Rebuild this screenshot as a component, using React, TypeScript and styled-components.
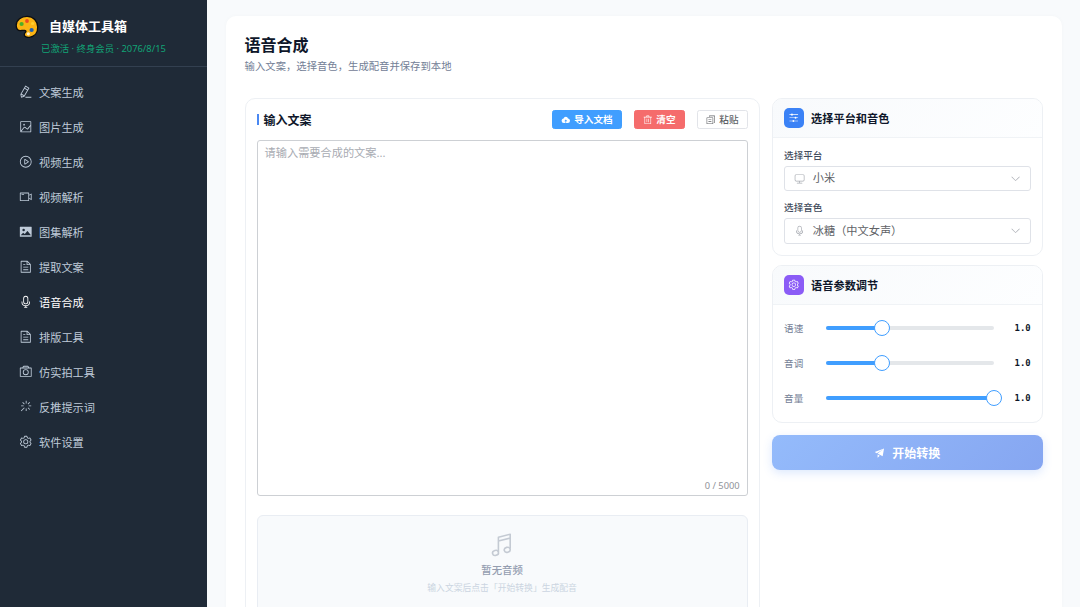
import React from 'react';
import styled, { createGlobalStyle } from 'styled-components';

const GlobalStyle = createGlobalStyle`
  *, *::before, *::after { box-sizing: border-box; }
  html, body, #root { height: 100%; }
  body {
    margin: 0;
    overflow: hidden;
    background: #f8fafc;
    font-family: "Noto Sans", "Noto Sans CJK SC", sans-serif;
    font-size: 11.2px;
    color: #0f172a;
  }
  button { font-family: inherit; margin: 0; }
  h1, h2, p { margin: 0; }
`;

const paths: Record<string, string> = {
  editPen:
    'm199.04 672.64 193.984 112 224-387.968-193.92-112-224 388.032zm-23.872 60.16 32.896 148.288 144.896-45.696zM455.04 229.248l193.92 112 56.704-98.112-193.984-112-56.64 98.112zM104.32 708.8l384-665.024 304.768 175.936L409.152 884.8h.064l-248.448 78.336zm384 254.272v-64h448v64h-448z',
  picture:
    'M160 160v704h704V160zm-32-64h768a32 32 0 0 1 32 32v768a32 32 0 0 1-32 32H128a32 32 0 0 1-32-32V128a32 32 0 0 1 32-32M384 288q64 0 64 64t-64 64-64-64 64-64M185.408 876.992l-50.816-38.912L350.72 556.032a96 96 0 0 1 134.592-17.856l1.856 1.472 122.88 99.136a32 32 0 0 0 44.992-4.864l216-269.888 49.92 39.936-215.808 269.824-.256.32a96 96 0 0 1-135.04 14.464l-122.88-99.072-.64-.512a32 32 0 0 0-44.8 5.952z',
  videoPlay:
    'M512 64a448 448 0 1 1 0 896 448 448 0 0 1 0-896m0 832a384 384 0 0 0 0-768 384 384 0 0 0 0 768m-48-247.616L668.608 512 464 375.616zm10.624-342.656 249.472 166.336a48 48 0 0 1 0 79.872L474.624 718.272A48 48 0 0 1 400 678.336V345.6a48 48 0 0 1 74.624-39.936z',
  videoCamera:
    'M704 768V256H128v512zm64-416 192-96v512l-192-96v128a32 32 0 0 1-32 32H96a32 32 0 0 1-32-32V224a32 32 0 0 1 32-32h640a32 32 0 0 1 32 32zm0 71.552v176.896l128 64V359.552zM192 320h192v64H192z',
  pictureFilled:
    'M96 896a32 32 0 0 1-32-32V160a32 32 0 0 1 32-32h832a32 32 0 0 1 32 32v704a32 32 0 0 1-32 32zm315.52-228.48-68.928-68.928a32 32 0 0 0-45.248 0L128 768.064h778.688l-242.112-290.56a32 32 0 0 0-49.216 0L458.752 665.408a32 32 0 0 1-47.232 2.112M256 384a96 96 0 1 0 192.064-.064A96 96 0 0 0 256 384',
  document:
    'M832 384H576V128H192v768h640zm-26.496-64L640 154.496V320zM160 64h480l256 256v608a32 32 0 0 1-32 32H160a32 32 0 0 1-32-32V96a32 32 0 0 1 32-32m160 448h384v64H320zm0-192h160v64H320zm0 384h384v64H320z',
  microphone:
    'M512 128a128 128 0 0 0-128 128v256a128 128 0 1 0 256 0V256a128 128 0 0 0-128-128m0-64a192 192 0 0 1 192 192v256a192 192 0 1 1-384 0V256A192 192 0 0 1 512 64m-32 832v-64a288 288 0 0 1-288-288v-32a32 32 0 0 1 64 0v32a224 224 0 0 0 224 224h64a224 224 0 0 0 224-224v-32a32 32 0 1 1 64 0v32a288 288 0 0 1-288 288v64h64a32 32 0 1 1 0 64H416a32 32 0 1 1 0-64z',
  camera:
    'M896 256H128v576h768zm-199.424-64-32.064-64h-304.96l-32 64zM96 192h160l46.336-92.608A64 64 0 0 1 359.552 64h304.96a64 64 0 0 1 57.216 35.328L768.192 192H928a32 32 0 0 1 32 32v640a32 32 0 0 1-32 32H96a32 32 0 0 1-32-32V224a32 32 0 0 1 32-32m416 512a160 160 0 1 0 0-320 160 160 0 0 0 0 320m0 64a224 224 0 1 1 0-448 224 224 0 0 1 0 448',
  magicStick:
    'M512 64h64v192h-64zm0 576h64v192h-64zM160 480v-64h192v64zm576 0v-64h192v64zM249.856 199.04l45.248-45.184L430.848 289.6 385.6 334.848 249.856 199.104zM657.152 606.4l45.248-45.248 135.744 135.744-45.248 45.248zM184.8 852.5 139.5 807.2 385.6 561.152l45.248 45.248zM702.4 334.848 657.152 289.6l135.744-135.744 45.248 45.248z',
  setting:
    'M600.704 64a32 32 0 0 1 30.464 22.208l35.2 109.376c14.784 7.232 28.928 15.36 42.432 24.512l112.384-24.192a32 32 0 0 1 34.432 15.36L944.32 364.8a32 32 0 0 1-4.032 37.504l-77.12 85.12a357.12 357.12 0 0 1 0 49.024l77.12 85.248a32 32 0 0 1 4.032 37.504l-88.704 153.6a32 32 0 0 1-34.432 15.296L708.8 803.904c-13.44 9.088-27.648 17.28-42.368 24.512l-35.264 109.376A32 32 0 0 1 600.704 960H423.296a32 32 0 0 1-30.464-22.208L357.696 828.48a351.616 351.616 0 0 1-42.56-24.64l-112.32 24.256a32 32 0 0 1-34.432-15.36L79.68 659.2a32 32 0 0 1 4.032-37.504l77.12-85.248a357.12 357.12 0 0 1 0-48.896l-77.12-85.248A32 32 0 0 1 79.68 364.8l88.704-153.6a32 32 0 0 1 34.432-15.296l112.32 24.256c13.568-9.152 27.776-17.408 42.56-24.64l35.2-109.312A32 32 0 0 1 423.232 64H600.64zm-23.424 64H446.72l-36.352 113.088-24.512 11.968a294.113 294.113 0 0 0-34.816 20.096l-22.656 15.36-116.224-25.088-65.28 113.152 79.68 88.192-1.92 27.136a293.12 293.12 0 0 0 0 40.192l1.92 27.136-79.808 88.192 65.344 113.152 116.224-25.024 22.656 15.296a294.113 294.113 0 0 0 34.816 20.096l24.512 11.968L446.72 896h130.688l36.48-113.152 24.448-11.904a288.282 288.282 0 0 0 34.752-20.096l22.592-15.296 116.288 25.024 65.28-113.152-79.744-88.192 1.92-27.136a293.12 293.12 0 0 0 0-40.256l-1.92-27.136 79.808-88.128-65.344-113.152-116.288 24.96-22.592-15.232a287.616 287.616 0 0 0-34.752-20.096l-24.448-11.904L577.344 128zM512 320a192 192 0 1 1 0 384 192 192 0 0 1 0-384m0 64a128 128 0 1 0 0 256 128 128 0 0 0 0-256',
  uploadFilled:
    'M544 864V672h128L512 480 352 672h128v192H320v-1.6c-5.376.32-10.496 1.6-16 1.6A240 240 0 0 1 64 624c0-123.136 93.12-223.488 212.608-237.248A239.808 239.808 0 0 1 512 192a239.872 239.872 0 0 1 235.456 194.752c119.488 13.76 212.48 114.112 212.48 237.248a240 240 0 0 1-240 240c-5.376 0-10.56-1.28-16-1.6v1.6z',
  delete:
    'M160 256H96a32 32 0 0 1 0-64h256V95.936a32 32 0 0 1 32-32h256a32 32 0 0 1 32 32V192h256a32 32 0 1 1 0 64h-64v672a32 32 0 0 1-32 32H192a32 32 0 0 1-32-32zm448-64v-64H416v64zM224 896h576V256H224zm192-128a32 32 0 0 1-32-32V416a32 32 0 0 1 64 0v320a32 32 0 0 1-32 32m192 0a32 32 0 0 1-32-32V416a32 32 0 0 1 64 0v320a32 32 0 0 1-32 32',
  documentCopy:
    'M128 320v576h576V320zm-32-64h640a32 32 0 0 1 32 32v640a32 32 0 0 1-32 32H96a32 32 0 0 1-32-32V288a32 32 0 0 1 32-32M960 96v704a32 32 0 0 1-32 32h-96v-64h64V128H384v64h-64V96a32 32 0 0 1 32-32h576a32 32 0 0 1 32 32M256 672h320v64H256zm0-192h320v64H256z',
  operation:
    'M389.44 768a96.064 96.064 0 0 1 181.12 0H896v64H570.56a96.064 96.064 0 0 1-181.12 0H128v-64zm192-288a96.064 96.064 0 0 1 181.12 0H896v64H762.56a96.064 96.064 0 0 1-181.12 0H128v-64zm-320-288a96.064 96.064 0 0 1 181.12 0H896v64H442.56a96.064 96.064 0 0 1-181.12 0H128v-64z',
  monitor:
    'M544 768v128h192a32 32 0 1 1 0 64H288a32 32 0 1 1 0-64h192V768H192A128 128 0 0 1 64 640V256a128 128 0 0 1 128-128h640a128 128 0 0 1 128 128v384a128 128 0 0 1-128 128zM192 192a64 64 0 0 0-64 64v384a64 64 0 0 0 64 64h640a64 64 0 0 0 64-64V256a64 64 0 0 0-64-64z',
  arrowDown:
    'M831.872 340.864 512 652.672 192.128 340.864a30.592 30.592 0 0 0-42.752 0 29.12 29.12 0 0 0 0 41.6L489.664 714.24a32 32 0 0 0 44.672 0l340.288-331.712a29.12 29.12 0 0 0 0-41.728 30.592 30.592 0 0 0-42.752 0z',
  promotion:
    'm64 448 832-320-128 704-446.08-243.328L832 192 242.816 545.472zm256 512V657.024L512 768z',
};

const Svg = styled.svg`
  display: block;
  flex: none;
`;

const Icon = ({ name, size }: { name: string; size: number }) => (
  <Svg width={size} height={size} viewBox="0 0 1024 1024" fill="currentColor">
    <path d={paths[name]} />
  </Svg>
);

const PaletteLogo = () => (
  <Svg width="24" height="24" viewBox="0 0 24 24">
    <path
      d="M12.3 1.4C6.2 1.2 1.4 5 1.2 10.1c-.1 3.7 1.7 5.7 4.5 5.5 2.3-.2 5.2-.9 5.3.7.1 1.2-2 1.7-1.7 3.5.3 1.9 2.4 3 5.2 2.5 5.3-.9 8.4-5 8.2-10.4C22.5 5.8 18.4 1.6 12.3 1.4z"
      fill="#fbb414"
      stroke="#0b0d10"
      strokeWidth="1.3"
    />
    <circle cx="6.6" cy="9" r="2.1" fill="#4fae29" />
    <circle cx="12" cy="6" r="1.9" fill="#ef4a23" />
    <circle cx="17.6" cy="8.5" r="1.6" fill="#ffcf2e" />
    <circle cx="16.6" cy="15" r="2.1" fill="#1f5fae" />
    <circle cx="13.3" cy="18.8" r="1.6" fill="#fff3d0" />
  </Svg>
);

const MusicIcon = () => (
  <Svg width="26" height="26" viewBox="0 0 26 26" fill="none" stroke="currentColor" strokeWidth="1.6">
    <path d="M9.4 20V5.2L21.2 2.2v14.6M9.4 9 21.2 6" strokeLinejoin="round" />
    <ellipse cx="6.5" cy="20.9" rx="3" ry="2.5" transform="rotate(-15 6.5 20.9)" />
    <ellipse cx="18.2" cy="17.8" rx="3" ry="2.5" transform="rotate(-15 18.2 17.8)" />
  </Svg>
);

const Shell = styled.div`
  display: flex;
  height: 607px;
  width: 1080px;
  overflow: hidden;
`;

const Sidebar = styled.aside`
  flex: none;
  width: 206.6px;
  background: #1f2a37;
`;

const Brand = styled.header`
  height: 67px;
  padding: 15px 15px 0;
  border-bottom: 1px solid #334050;
`;

const BrandRow = styled.div`
  display: flex;
  align-items: center;
  gap: 10px;
  height: 23px;
`;

const BrandName = styled.div`
  padding-bottom: 2px;
  color: #fff;
  font-size: 13px;
  font-weight: 700;
  line-height: 20px;
`;

const License = styled.div`
  margin: 3px 0 0 26px;
  color: #10b981;
  opacity: 0.85;
  font-size: 9.4px;
  line-height: 16px;
  white-space: nowrap;
`;

const Nav = styled.nav`
  display: flex;
  flex-direction: column;
  padding-top: 7px;
`;

const NavItem = styled.a<{ $active?: boolean }>`
  display: flex;
  align-items: center;
  gap: 6.5px;
  height: 35px;
  padding-left: 19px;
  color: ${(p) => (p.$active ? '#ffffff' : '#bfcbd9')};
  font-size: 11.2px;
`;

const Main = styled.main`
  flex: 1;
  min-width: 0;
  padding: 16px 18.5px 0 19px;
`;

const Page = styled.section`
  height: 700px;
  padding: 17px 19px;
  background: #fff;
  border-radius: 10px;
  box-shadow: 0 0 5px rgba(15, 23, 42, 0.025);
`;

const PageTitle = styled.h1`
  font-size: 16px;
  font-weight: 700;
  line-height: 24px;
`;

const PageSubtitle = styled.p`
  margin-top: 2px;
  color: #738096;
  font-size: 10.35px;
  line-height: 15px;
`;

const Columns = styled.div`
  display: grid;
  grid-template-columns: 515px 270.5px;
  gap: 12.5px;
  align-items: start;
  margin-top: 24px;
`;

const Editor = styled.section`
  height: 620px;
  padding: 10.5px 11px 0;
  border: 1px solid #edf0f4;
  border-radius: 10px;
`;

const EditorHead = styled.div`
  display: flex;
  align-items: center;
  height: 20px;
`;

const EditorTitle = styled.h2`
  display: flex;
  align-items: center;
  gap: 4.8px;
  margin-right: auto;
  font-size: 12px;
  font-weight: 700;

  &::before {
    content: '';
    width: 2px;
    height: 11px;
    background: #4a88f2;
  }
`;

const tones = {
  primary: ['#409eff', '#409eff', '#ffffff'],
  danger: ['#f56c6c', '#f56c6c', '#ffffff'],
  plain: ['#ffffff', '#e2e4e9', '#606266'],
};

const ToolButton = styled.button<{ $tone: keyof typeof tones; $width: number }>`
  display: flex;
  align-items: center;
  justify-content: center;
  gap: 4px;
  width: ${(p) => p.$width}px;
  height: 19px;
  margin-left: 12px;
  padding: 0;
  background: ${(p) => tones[p.$tone][0]};
  border: 1px solid ${(p) => tones[p.$tone][1]};
  border-radius: 2.5px;
  color: ${(p) => tones[p.$tone][2]};
  font-size: 9.6px;
  font-weight: ${(p) => (p.$tone === 'plain' ? 500 : 700)};
  line-height: 14px;
`;

const TextBox = styled.div`
  display: flex;
  flex-direction: column;
  justify-content: space-between;
  height: 356px;
  margin-top: 10.5px;
  padding: 4px 7px 1px;
  border: 1px solid #cdd0d4;
  border-radius: 3px;
`;

const Placeholder = styled.div`
  color: #a8abb2;
  font-size: 11.2px;
  line-height: 16px;
`;

const Counter = styled.div`
  align-self: flex-end;
  color: #909399;
  font-size: 9.3px;
  line-height: 16px;
`;

const EmptyAudio = styled.div`
  display: flex;
  flex-direction: column;
  align-items: center;
  height: 110px;
  margin-top: 19px;
  padding-top: 16px;
  background: #f8fafc;
  border: 1px solid #e9edf3;
  border-radius: 6px;
  color: #c4cad3;
`;

const EmptyTitle = styled.p`
  margin-top: 3.5px;
  color: #949db0;
  font-size: 10.4px;
  font-weight: 500;
  line-height: 16px;
`;

const EmptyHint = styled.p`
  margin-top: 3px;
  color: #cbd5e1;
  font-size: 8.8px;
  line-height: 14px;
`;

const Side = styled.div`
  display: flex;
  flex-direction: column;
`;

const Card = styled.section<{ $height: number }>`
  height: ${(p) => p.$height}px;
  margin-bottom: 9.5px;
  border: 1px solid #edf0f4;
  border-radius: 10px;
  overflow: hidden;
`;

const CardHead = styled.header`
  display: flex;
  align-items: center;
  gap: 7.5px;
  height: 38.5px;
  padding: 0 11px;
  background: linear-gradient(135deg, #f8fafc, #fdfeff);
  border-bottom: 1px solid #f0f3f6;
  font-size: 11.2px;
  font-weight: 700;
`;

const Tile = styled.span<{ $color: string }>`
  display: flex;
  align-items: center;
  justify-content: center;
  width: 19.5px;
  height: 19.5px;
  background: ${(p) => p.$color};
  border-radius: 5px;
  color: #fff;
`;

const Fields = styled.div`
  padding: 10px 11px 0;
`;

const FieldLabel = styled.div<{ $spaced?: boolean }>`
  margin-top: ${(p) => (p.$spaced ? 9 : 0)}px;
  color: #3f4b5c;
  font-size: 9.6px;
  font-weight: 500;
  line-height: 15px;
`;

const Select = styled.div`
  display: flex;
  align-items: center;
  height: 25.5px;
  margin-top: 3px;
  padding: 0 8.5px 0 9px;
  border: 1px solid #dfe2e8;
  border-radius: 3px;
  color: #a8abb2;
`;

const SelectValue = styled.span`
  flex: 1;
  margin-left: 7.5px;
  color: #606266;
  font-size: 11.2px;
  line-height: 16px;
`;

const Sliders = styled.div`
  padding-top: 6px;
`;

const SliderRow = styled.div`
  display: flex;
  align-items: center;
  height: 35px;
  padding: 0 11px;
`;

const SliderLabel = styled.span`
  width: 41.5px;
  color: #738096;
  font-size: 9.6px;
`;

const Track = styled.div`
  display: flex;
  align-items: center;
  width: 168.5px;
  height: 4.8px;
  background: #e4e7ea;
  border-radius: 3px;
`;

const Fill = styled.div`
  height: 100%;
  background: #409eff;
  border-radius: 3px 0 0 3px;
`;

const Thumb = styled.div`
  flex: none;
  width: 16px;
  height: 16px;
  margin: 0 -8px;
  background: #fff;
  border: 1.5px solid #409eff;
  border-radius: 50%;
`;

const SliderValue = styled.span`
  margin-left: auto;
  font-family: "DejaVu Sans Mono", monospace;
  font-size: 8.9px;
  font-weight: 700;
`;

const StartButton = styled.button`
  display: flex;
  align-items: center;
  justify-content: center;
  gap: 6.5px;
  height: 35px;
  margin-top: 3px;
  padding: 0;
  background: linear-gradient(135deg, #94bbfb, #86a6f1);
  border: 0;
  border-radius: 8px;
  box-shadow: 0 3px 10px rgba(59, 130, 246, 0.18);
  color: #fff;
  font-size: 12px;
  font-weight: 700;
`;

const menu = [
  ['editPen', '文案生成'],
  ['picture', '图片生成'],
  ['videoPlay', '视频生成'],
  ['videoCamera', '视频解析'],
  ['pictureFilled', '图集解析'],
  ['document', '提取文案'],
  ['microphone', '语音合成'],
  ['document', '排版工具'],
  ['camera', '仿实拍工具'],
  ['magicStick', '反推提示词'],
  ['setting', '软件设置'],
];

const sliders = [
  { label: '语速', percent: 33.3 },
  { label: '音调', percent: 33.3 },
  { label: '音量', percent: 100 },
];

export default function App() {
  return (
    <>
      <GlobalStyle />
      <Shell>
        <Sidebar>
          <Brand>
            <BrandRow>
              <PaletteLogo />
              <BrandName>自媒体工具箱</BrandName>
            </BrandRow>
            <License>已激活 · 终身会员 · 2076/8/15</License>
          </Brand>
          <Nav>
            {menu.map(([icon, label]) => (
              <NavItem key={label} $active={label === '语音合成'}>
                <Icon name={icon} size={13.5} />
                {label}
              </NavItem>
            ))}
          </Nav>
        </Sidebar>
        <Main>
          <Page>
            <PageTitle>语音合成</PageTitle>
            <PageSubtitle>输入文案，选择音色，生成配音并保存到本地</PageSubtitle>
            <Columns>
              <Editor>
                <EditorHead>
                  <EditorTitle>输入文案</EditorTitle>
                  <ToolButton $tone="primary" $width={70}>
                    <Icon name="uploadFilled" size={9.6} />
                    导入文档
                  </ToolButton>
                  <ToolButton $tone="danger" $width={51}>
                    <Icon name="delete" size={9.6} />
                    清空
                  </ToolButton>
                  <ToolButton $tone="plain" $width={51}>
                    <Icon name="documentCopy" size={9.6} />
                    粘贴
                  </ToolButton>
                </EditorHead>
                <TextBox>
                  <Placeholder>请输入需要合成的文案...</Placeholder>
                  <Counter>0 / 5000</Counter>
                </TextBox>
                <EmptyAudio>
                  <MusicIcon />
                  <EmptyTitle>暂无音频</EmptyTitle>
                  <EmptyHint>输入文案后点击「开始转换」生成配音</EmptyHint>
                </EmptyAudio>
              </Editor>
              <Side>
                <Card $height={157.5}>
                  <CardHead>
                    <Tile $color="#3b82f6">
                      <Icon name="operation" size={11.5} />
                    </Tile>
                    选择平台和音色
                  </CardHead>
                  <Fields>
                    <FieldLabel>选择平台</FieldLabel>
                    <Select>
                      <Icon name="monitor" size={11.2} />
                      <SelectValue>小米</SelectValue>
                      <Icon name="arrowDown" size={11.2} />
                    </Select>
                    <FieldLabel $spaced>选择音色</FieldLabel>
                    <Select>
                      <Icon name="microphone" size={11.2} />
                      <SelectValue>冰糖（中文女声）</SelectValue>
                      <Icon name="arrowDown" size={11.2} />
                    </Select>
                  </Fields>
                </Card>
                <Card $height={157.5}>
                  <CardHead>
                    <Tile $color="#8b5cf6">
                      <Icon name="setting" size={11.5} />
                    </Tile>
                    语音参数调节
                  </CardHead>
                  <Sliders>
                    {sliders.map((s) => (
                      <SliderRow key={s.label}>
                        <SliderLabel>{s.label}</SliderLabel>
                        <Track>
                          <Fill style={{ width: `${s.percent}%` }} />
                          <Thumb />
                        </Track>
                        <SliderValue>1.0</SliderValue>
                      </SliderRow>
                    ))}
                  </Sliders>
                </Card>
                <StartButton>
                  <Icon name="promotion" size={11.5} />
                  开始转换
                </StartButton>
              </Side>
            </Columns>
          </Page>
        </Main>
      </Shell>
    </>
  );
}
